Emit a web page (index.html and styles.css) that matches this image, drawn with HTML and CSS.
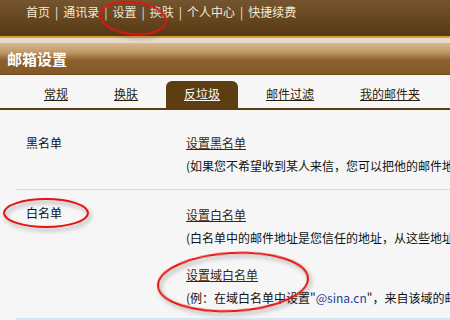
FILE: index.html
```html
<!DOCTYPE html>
<html lang="zh">
<head>
<meta charset="utf-8">
<link rel="stylesheet" href="styles.css">
</head>
<body>
<div class="page">
  <div class="topbar">
    <a class="nav">首页</a><span class="sep">|</span>
    <a class="nav">通讯录</a><span class="sep">|</span>
    <a class="nav">设置</a><span class="sep">|</span>
    <a class="nav">换肤</a><span class="sep">|</span>
    <a class="nav">个人中心</a><span class="sep">|</span>
    <a class="nav">快捷续费</a>
  </div>
  <div class="goldline"></div>
  <div class="creamband"></div>
  <div class="header">邮箱设置</div>
  <div class="tabs">
    <a class="tab">常规</a>
    <a class="tab">换肤</a>
    <a class="tab active">反垃圾</a>
    <a class="tab">邮件过滤</a>
    <a class="tab">我的邮件夹</a>
  </div>
  <div class="content">
    <div class="row first">
      <div class="label">黑名单</div>
      <div class="body">
        <a class="link">设置黑名单</a>
        <div class="desc">(如果您不希望收到某人来信，您可以把他的邮件地址加入黑名单)</div>
      </div>
    </div>
    <div class="row second">
      <div class="label">白名单</div>
      <div class="body">
        <a class="link">设置白名单</a>
        <div class="desc">(白名单中的邮件地址是您信任的地址，从这些地址发来的邮件不会被拦截)</div>
        <a class="link gap">设置域白名单</a>
        <div class="desc">(例：在域白名单中设置"<span class="domain">@sina.cn</span>"，来自该域的邮件不会被拦截)</div>
      </div>
    </div>
    <div class="bottombar"></div>
  </div>
  <svg class="marks" width="450" height="320" viewBox="0 0 450 320">
    <ellipse cx="133" cy="18" rx="33" ry="16" transform="rotate(6 133 18)"/>
    <ellipse cx="46" cy="213" rx="42" ry="14"/>
    <ellipse cx="233" cy="282" rx="75" ry="29" transform="rotate(-3 233 282)"/>
  </svg>
</div>
</body>
</html>
```
FILE: styles.css
```css
html, body {
  margin: 0;
  padding: 0;
}
body {
  width: 450px;
  height: 320px;
  overflow: hidden;
  background: #f6f6f6;
  font-family: "Noto Sans CJK SC", "Noto Sans", sans-serif;
  font-size: 12px;
}
.page {
  position: relative;
  width: 450px;
  height: 320px;
  overflow: hidden;
}
.topbar {
  height: 36px;
  background: linear-gradient(#75552f, #573912);
  display: flex;
  align-items: center;
  padding-left: 26px;
  padding-bottom: 13px;
  box-sizing: border-box;
  color: #f3ead2;
  font-size: 12px;
}
.nav {
  color: #f3ead2;
}
.sep {
  margin: 0 5px;
  font-size: 12px;
}
.goldline {
  height: 2px;
  background: #d8a13c;
}
.creamband {
  height: 5px;
  background: #e7dccb;
}
.header {
  height: 31px;
  background: linear-gradient(#d7b98e 0%, #c09868 30%, #8e6130 55%, #845726 100%);
  color: #ffffff;
  font-weight: bold;
  font-size: 15px;
  line-height: 31px;
  padding-left: 7px;
  border-bottom: 1px solid #6b4a1c;
}
.tabs {
  display: flex;
  gap: 10px;
  padding: 6px 0 0 26px;
  height: 27px;
  border-bottom: 2px solid #5d3d12;
}
.tab {
  padding: 0 18px;
  line-height: 25px;
  color: #2e1c06;
  text-decoration: underline;
  border-radius: 6px 6px 0 0;
}
.tab.active {
  background: #5d3d12;
  color: #ffffff;
}
.content {
  padding-left: 16px;
}
.row {
  display: flex;
  border-bottom: 1px solid #c9e0ef;
}
.row.first {
  padding: 23px 0 13px;
}
.row.second {
  padding: 15px 0 10px;
  border-bottom: none;
}
.label {
  width: 160px;
  padding-left: 10px;
  line-height: 20px;
  color: #111;
}
.row.second .label {
  margin-top: -2px;
}
.body {
  flex: 1;
  min-width: 0;
}
.link {
  display: block;
  line-height: 20px;
  color: #3b2508;
  text-decoration: underline;
  width: max-content;
}
.link.gap {
  margin-top: 17px;
}
.desc {
  margin-top: 3px;
  line-height: 20px;
  white-space: nowrap;
  overflow: hidden;
  color: #111;
}
.domain {
  color: #1e3e9a;
}
.bottombar {
  height: 4px;
  background: #d3e6f3;
}
.marks {
  position: absolute;
  left: 0;
  top: 0;
  pointer-events: none;
}
.marks ellipse {
  fill: none;
  stroke: #e8120e;
  stroke-width: 2;
  filter: drop-shadow(2px 3px 2px rgba(60, 60, 60, 0.45));
}
```
